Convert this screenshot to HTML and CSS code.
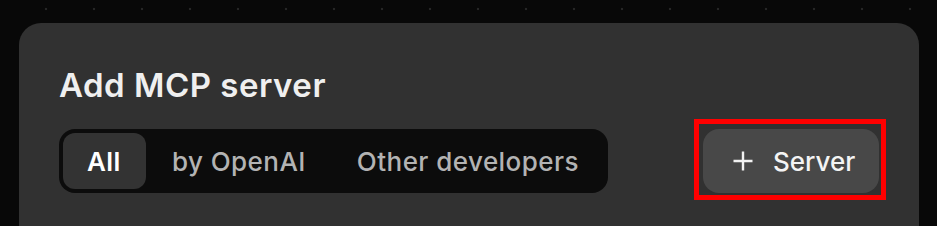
FILE: index.html
```html
<!DOCTYPE html>
<html lang="en">
<head>
<meta charset="utf-8">
<title>Add MCP server</title>
<link rel="stylesheet" href="styles.css">
</head>
<body>
<div class="card">
  <h1 class="title">Add MCP server</h1>
  <div class="row">
    <div class="tabs">
      <button class="tab active">All</button>
      <button class="tab">by OpenAI</button>
      <button class="tab">Other developers</button>
    </div>
    <div class="btn-wrap">
      <button class="add-btn">
        <svg class="plus" width="20" height="20" viewBox="0 0 20 20" aria-hidden="true">
          <path d="M10 0.5v19M0.5 10h19" stroke="#f2f2f2" stroke-width="2.4" fill="none"/>
        </svg>
        <span>Server</span>
      </button>
      <div class="highlight"></div>
    </div>
  </div>
</div>
</body>
</html>
```

FILE: styles.css
```css
html, body {
  margin: 0;
  padding: 0;
  height: 100%;
  overflow: hidden;
}
body {
  background-color: #080808;
  background-image: radial-gradient(circle at 24px 24px, #262626 0, #262626 1px, transparent 1.6px);
  background-size: 48px 48px;
  background-position: 22px -15px;
  font-family: Inter, "Noto Sans", sans-serif;
}
.card {
  margin: 23px 18px 0 19px;
  height: 260px;
  background: #313131;
  border-radius: 22px;
  padding: 40px 40px 0 40px;
  box-sizing: border-box;
}
.title {
  margin: 0;
  font-size: 33px;
  line-height: 44px;
  font-weight: 600;
  color: #efefef;
  letter-spacing: 0.5px;
}
.row {
  margin-top: 22px;
  display: flex;
  justify-content: space-between;
  align-items: center;
}
.tabs {
  display: flex;
  background: #0c0c0c;
  border-radius: 16px;
  padding: 4px;
  height: 64px;
  box-sizing: border-box;
}
.tab {
  border: 0;
  background: transparent;
  font-family: inherit;
  font-size: 26px;
  font-weight: 500;
  color: #b3b3b3;
  padding: 0 25px 0 26px;
  height: 56px;
  border-radius: 12px;
  letter-spacing: 0.45px;
}
.tab.active {
  background: #333333;
  color: #ffffff;
  font-weight: 600;
  padding: 0 25px 0 24px;
}
.btn-wrap {
  position: relative;
}
.add-btn {
  display: flex;
  align-items: center;
  gap: 20px;
  border: 0;
  background: #484848;
  color: #f4f4f4;
  font-family: inherit;
  font-size: 26px;
  font-weight: 500;
  height: 64px;
  width: 176px;
  padding: 0 0 0 30px;
  border-radius: 16px;
  box-sizing: border-box;
}
.plus {
  flex: none;
}
.highlight {
  position: absolute;
  left: -9px;
  top: -10px;
  right: -7px;
  bottom: -7px;
  border: 5px solid #ff0000;
  pointer-events: none;
}
```
